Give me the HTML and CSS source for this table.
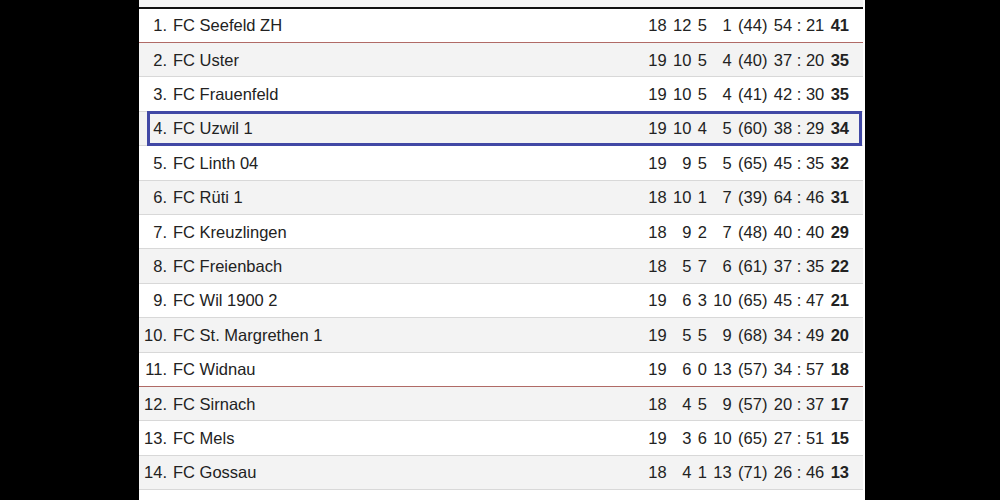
FILE: index.html
```html
<!DOCTYPE html>
<html lang="de">
<head>
<meta charset="utf-8">
<title>Tabelle</title>
<link rel="stylesheet" href="styles.css">
</head>
<body>
<div class="panel">
  <div class="top"></div>
  <div class="table">
    <div class="row promo"><span class="rk">1.</span><span class="nm">FC Seefeld ZH</span><span class="n2">18</span><span class="n2">12</span><span class="n1">5</span><span class="n2">1</span><span class="pen">(44)</span><span class="g">54 : 21</span><span class="pt">41</span></div>
    <div class="row"><span class="rk">2.</span><span class="nm">FC Uster</span><span class="n2">19</span><span class="n2">10</span><span class="n1">5</span><span class="n2">4</span><span class="pen">(40)</span><span class="g">37 : 20</span><span class="pt">35</span></div>
    <div class="row"><span class="rk">3.</span><span class="nm">FC Frauenfeld</span><span class="n2">19</span><span class="n2">10</span><span class="n1">5</span><span class="n2">4</span><span class="pen">(41)</span><span class="g">42 : 30</span><span class="pt">35</span></div>
    <div class="row own"><span class="rk">4.</span><span class="nm">FC Uzwil 1</span><span class="n2">19</span><span class="n2">10</span><span class="n1">4</span><span class="n2">5</span><span class="pen">(60)</span><span class="g">38 : 29</span><span class="pt">34</span></div>
    <div class="row"><span class="rk">5.</span><span class="nm">FC Linth 04</span><span class="n2">19</span><span class="n2">9</span><span class="n1">5</span><span class="n2">5</span><span class="pen">(65)</span><span class="g">45 : 35</span><span class="pt">32</span></div>
    <div class="row"><span class="rk">6.</span><span class="nm">FC Rüti 1</span><span class="n2">18</span><span class="n2">10</span><span class="n1">1</span><span class="n2">7</span><span class="pen">(39)</span><span class="g">64 : 46</span><span class="pt">31</span></div>
    <div class="row"><span class="rk">7.</span><span class="nm">FC Kreuzlingen</span><span class="n2">18</span><span class="n2">9</span><span class="n1">2</span><span class="n2">7</span><span class="pen">(48)</span><span class="g">40 : 40</span><span class="pt">29</span></div>
    <div class="row"><span class="rk">8.</span><span class="nm">FC Freienbach</span><span class="n2">18</span><span class="n2">5</span><span class="n1">7</span><span class="n2">6</span><span class="pen">(61)</span><span class="g">37 : 35</span><span class="pt">22</span></div>
    <div class="row"><span class="rk">9.</span><span class="nm">FC Wil 1900 2</span><span class="n2">19</span><span class="n2">6</span><span class="n1">3</span><span class="n2">10</span><span class="pen">(65)</span><span class="g">45 : 47</span><span class="pt">21</span></div>
    <div class="row"><span class="rk">10.</span><span class="nm">FC St. Margrethen 1</span><span class="n2">19</span><span class="n2">5</span><span class="n1">5</span><span class="n2">9</span><span class="pen">(68)</span><span class="g">34 : 49</span><span class="pt">20</span></div>
    <div class="row releg"><span class="rk">11.</span><span class="nm">FC Widnau</span><span class="n2">19</span><span class="n2">6</span><span class="n1">0</span><span class="n2">13</span><span class="pen">(57)</span><span class="g">34 : 57</span><span class="pt">18</span></div>
    <div class="row"><span class="rk">12.</span><span class="nm">FC Sirnach</span><span class="n2">18</span><span class="n2">4</span><span class="n1">5</span><span class="n2">9</span><span class="pen">(57)</span><span class="g">20 : 37</span><span class="pt">17</span></div>
    <div class="row"><span class="rk">13.</span><span class="nm">FC Mels</span><span class="n2">19</span><span class="n2">3</span><span class="n1">6</span><span class="n2">10</span><span class="pen">(65)</span><span class="g">27 : 51</span><span class="pt">15</span></div>
    <div class="row"><span class="rk">14.</span><span class="nm">FC Gossau</span><span class="n2">18</span><span class="n2">4</span><span class="n1">1</span><span class="n2">13</span><span class="pen">(71)</span><span class="g">26 : 46</span><span class="pt">13</span></div>
  </div>
</div>
</body>
</html>
```

FILE: styles.css
```css
html, body {
  margin: 0;
  padding: 0;
  background: #000;
  height: 100%;
}
body {
  font-family: "Liberation Sans", Arial, sans-serif;
  font-size: 16.5px;
  color: #222;
}
.panel {
  margin-left: 139px;
  width: 726px;
  height: 500px;
  background: #fff;
  overflow: hidden;
}
.top {
  width: 724px;
  height: 6.6px;
  background: #f4f4f4;
  border-bottom: 2px solid #111;
}
.table {
  width: 724px;
}
.row {
  position: relative;
  display: flex;
  align-items: center;
  gap: 6.4px;
  padding-right: 14px;
  padding-top: 1px;
  box-sizing: border-box;
  height: 34.4px;
  border-bottom: 1px solid #d8d8d8;
  background: #fff;
  white-space: nowrap;
}
.row:nth-child(even) {
  background: #f3f3f3;
}
.row.promo, .row.releg {
  border-bottom-color: #b06a66;
}
.row.own::after {
  content: "";
  position: absolute;
  left: 8px;
  right: 1px;
  top: -1px;
  bottom: -1px;
  border: 3px solid #4148a5;
  pointer-events: none;
}
.rk {
  width: 28px;
  text-align: right;
}
.nm {
  flex: 1;
  margin-left: -0.4px;
}
.n2, .n1, .pt {
  text-align: right;
}
.n2 { width: 2ch; }
.n1 { width: 1ch; }
.pt {
  width: 2ch;
  font-weight: bold;
}
```
